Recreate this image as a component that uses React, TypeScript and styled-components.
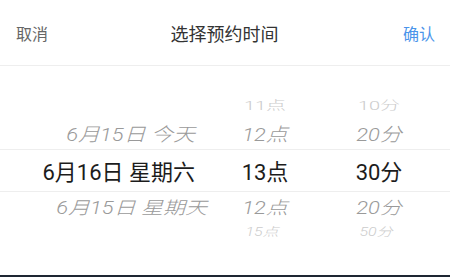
import styled, { createGlobalStyle, css } from "styled-components";

const GlobalStyle = createGlobalStyle`
  html, body {
    margin: 0;
    padding: 0;
    background: #1e2632;
  }
  body {
    font-family: "Liberation Sans", "Noto Sans CJK SC", sans-serif;
  }
`;

const Sheet = styled.div`
  width: 450px;
  height: 275px;
  background: #fff;
  overflow: hidden;
`;

const Header = styled.div`
  height: 65px;
  display: flex;
  align-items: center;
  justify-content: space-between;
  padding: 0 15px 0 16px;
  border-bottom: 1px solid #eeeeee;
  box-sizing: content-box;
`;

const HeaderBtn = styled.span<{ $primary?: boolean }>`
  font-size: 16px;
  color: ${(p) => (p.$primary ? "#4a94ea" : "#666")};
  width: 60px;
  text-align: ${(p) => (p.$primary ? "right" : "left")};
`;

const Title = styled.span`
  font-size: 18px;
  color: #333;
  margin-right: 2px;
`;

const Picker = styled.div`
  padding-top: 24px;
  font-family: "Roboto", "Noto Sans CJK SC", sans-serif;
  font-weight: 300;
`;

type Kind = "farTop" | "near" | "selected" | "nearBottom" | "farBottom";

const rowHeights: Record<Kind, number> = {
  farTop: 30,
  near: 29,
  selected: 41,
  nearBottom: 32,
  farBottom: 16,
};

const Row = styled.div<{ $kind: Kind }>`
  display: grid;
  grid-template-columns: 210px 110px 118px 1fr;
  align-items: center;
  height: ${(p) => rowHeights[p.$kind]}px;
  ${(p) =>
    p.$kind === "selected" &&
    css`
      border-top: 1px solid #eeeeee;
      border-bottom: 1px solid #eeeeee;
    `}
`;

const Cell = styled.div<{ $kind: Kind; $date?: boolean; $shift?: number }>`
  white-space: nowrap;
  line-height: 1;
  text-align: ${(p) => (p.$date ? "right" : "center")};
  padding-right: ${(p) => (p.$date ? "15px" : "0")};
  ${(p) => {
    switch (p.$kind) {
      case "selected":
        return css`
          font-size: 22px;
          color: #1c1c1c;
          font-weight: 400;
          transform: translateY(2px);
        `;
      case "near":
        return css`
          font-size: 22px;
          color: #9a9a9a;
          font-style: italic;
          transform: translateX(${p.$shift ?? 0}px) scaleY(0.85);
        `;
      case "nearBottom":
        return css`
          font-size: 22px;
          color: #9a9a9a;
          font-style: italic;
          transform: translateX(${p.$shift ?? 0}px) scaleY(0.8);
        `;
      case "farTop":
        return css`
          font-size: 20px;
          color: #cccccc;
          transform: translateY(1px) scaleY(0.6);
        `;
      case "farBottom":
        return css`
          font-size: 16px;
          color: #cccccc;
          font-style: italic;
          transform: translateX(-3px) scaleY(0.75);
        `;
    }
  }}
`;

const rows: { kind: Kind; date: string; hour: string; minute: string; shift?: number }[] = [
  { kind: "farTop", date: "", hour: "11点", minute: "10分" },
  { kind: "near", date: "6月15日 今天", hour: "12点", minute: "20分" },
  { kind: "selected", date: "6月16日 星期六", hour: "13点", minute: "30分" },
  { kind: "nearBottom", date: "6月15日 星期天", hour: "12点", minute: "20分", shift: 12 },
  { kind: "farBottom", date: "", hour: "15点", minute: "50分" },
];

const App = () => {
  return (
    <>
      <GlobalStyle />
      <Sheet>
        <Header>
          <HeaderBtn>取消</HeaderBtn>
          <Title>选择预约时间</Title>
          <HeaderBtn $primary>确认</HeaderBtn>
        </Header>
        <Picker>
          {rows.map((r, i) => (
            <Row key={i} $kind={r.kind}>
              <Cell $kind={r.kind} $date $shift={r.shift}>
                {r.date}
              </Cell>
              <Cell $kind={r.kind}>{r.hour}</Cell>
              <Cell $kind={r.kind}>{r.minute}</Cell>
            </Row>
          ))}
        </Picker>
      </Sheet>
    </>
  );
};

export default App;
